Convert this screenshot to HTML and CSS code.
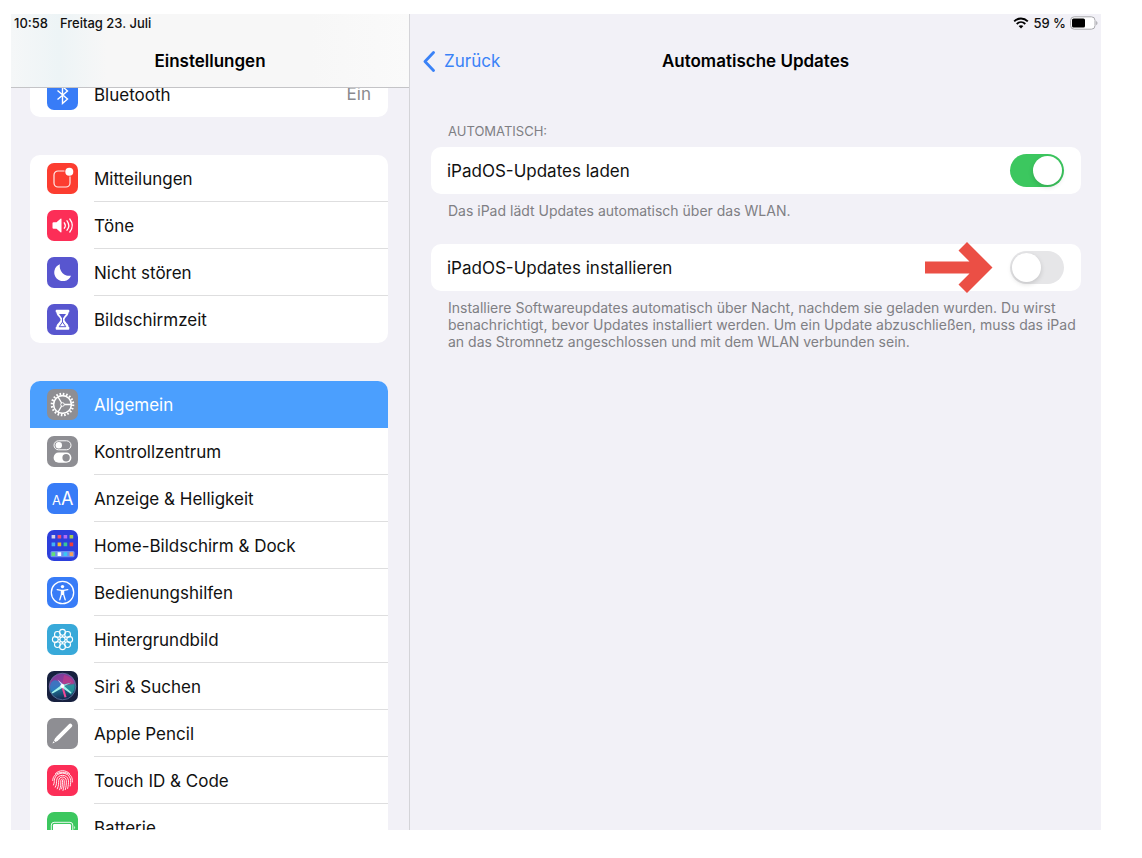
FILE: index.html
```html
<!DOCTYPE html>
<html lang="de">
<head>
    <meta charset="UTF-8">
    <meta name="viewport" content="width=device-width, initial-scale=1.0">
    <title>Einstellungen</title>
    <link rel="stylesheet" href="styles.css">
</head>
<body>
    <div class="screen">
        <aside class="sidebar">
            <header class="sidebar-header">
                <div class="status">
                    <span>10:58</span>
                    <span>Freitag 23. Juli</span>
                </div>
                <h1 class="title">Einstellungen</h1>
            </header>

            <nav class="list">
                <div class="group">
                    <a class="row" href="#">
                        <svg class="icon blue" viewBox="0 0 31 31"><path d="M10.500 11.500l10 8.500-5 4.500v-17l5 4.500-10 8.500" fill="none" stroke="#fff" stroke-width="1.400"/></svg>
                        <span class="label">Bluetooth</span>
                        <span class="value">Ein</span>
                    </a>
                </div>

                <div class="group">
                    <a class="row" href="#">
                        <svg class="icon red" viewBox="0 0 31 31">
                            <path d="M17.500 8H11a4 4 0 0 0-4 4v8a4 4 0 0 0 4 4h8a4 4 0 0 0 4-4v-6.500" fill="none" stroke="#fff" stroke-width="1.200" opacity=".9"/>
                            <circle cx="22.300" cy="8.700" r="4" fill="#fff"/>
                        </svg>
                        <span class="label">Mitteilungen</span>
                    </a>
                    <a class="row" href="#">
                        <svg class="icon pink" viewBox="0 0 31 31">
                            <path d="M5.500 13.200q0-1 1-1h3l4-3.400q1-.7 1 .5v12.400q0 1.200-1 .5l-4-3.400h-3q-1 0-1-1z" fill="#fff"/>
                            <path d="M17.300 12.800q2 2.700 0 5.400M20 10.800q3.600 4.700 0 9.400M22.800 9q5 6.500 0 13" fill="none" stroke="#fff" stroke-width="1.300" stroke-linecap="round"/>
                        </svg>
                        <span class="label">Töne</span>
                    </a>
                    <a class="row" href="#">
                        <svg class="icon indigo" viewBox="0 0 31 31"><path d="M13 7.200a9.500 9.500 0 0 0 11 11.500A8.700 8.700 0 1 1 13 7.200z" fill="#fff"/></svg>
                        <span class="label">Nicht stören</span>
                    </a>
                    <a class="row" href="#">
                        <svg class="icon indigo" viewBox="0 0 31 31">
                            <path d="M9.500 5.800h12q.8 0 .8.800v1.200q0 .8-.8.800c0 3.400-4 5-4 7.200s4 3.800 4 7q.8 0 .8.800v1.400q0 .8-.8.800h-12q-.8 0-.8-.8v-1.400q0-.8.8-.8c0-3.200 4-4.800 4-7s-4-3.800-4-7.200q-.8 0-.8-.8V6.600q0-.8.800-.8z" fill="#fff"/>
                            <path d="M12 10h7l-3 4.200h-1z" fill="#5856cf"/>
                            <path d="M15.500 13v5M15.500 18l-3.300 4.700h6.600z" fill="none" stroke="#5856cf" stroke-width="1"/>
                        </svg>
                        <span class="label">Bildschirmzeit</span>
                    </a>
                </div>

                <div class="group">
                    <a class="row selected" href="#">
                        <svg class="icon gray" viewBox="0 0 31 31">
                            <g fill="none" stroke="#fff">
                                <circle cx="15.500" cy="15.500" r="10.600" stroke-width="2.400" stroke-dasharray="1.600 1.730"/>
                                <circle cx="15.500" cy="15.500" r="8.900" stroke-width="1.600"/>
                                <circle cx="15.500" cy="15.500" r="1.800" stroke-width="1"/>
                                <path d="M17.300 15.500h7M14.600 14L11 7.800M14.600 17L11 23.200" stroke-width="1.300"/>
                            </g>
                        </svg>
                        <span class="label">Allgemein</span>
                    </a>
                    <a class="row" href="#">
                        <svg class="icon gray" viewBox="0 0 31 31">
                            <rect x="7" y="4.800" width="17" height="9" rx="4.500" fill="none" stroke="#fff" stroke-width="1"/>
                            <circle cx="11.800" cy="9.300" r="3.200" fill="#fff"/>
                            <rect x="6.600" y="16.600" width="17.800" height="10.200" rx="5.100" fill="#fff"/>
                            <circle cx="19.100" cy="21.700" r="3.700" fill="#8e8e93"/>
                        </svg>
                        <span class="label">Kontrollzentrum</span>
                    </a>
                    <a class="row" href="#">
                        <svg class="icon blue" viewBox="0 0 31 31">
                            <text class="glyph" x="5" y="22" font-size="13">A</text>
                            <text class="glyph" x="14" y="22" font-size="18">A</text>
                        </svg>
                        <span class="label">Anzeige &amp; Helligkeit</span>
                    </a>
                    <a class="row" href="#">
                        <svg class="icon home" viewBox="0 0 31 31">
                            <rect x="3.500" y="21" width="24" height="6.200" rx="1.500" fill="#6d8df0"/>
                            <g stroke-width="3.600">
                                <path d="M4.600 6.800h3.600" stroke="#d5d3e6"/><path d="M10.600 6.800h3.600" stroke="#f4506a"/><path d="M16.600 6.800h3.600" stroke="#b26cf5"/><path d="M22.600 6.800h3.600" stroke="#a5cf4c"/>
                                <path d="M4.600 14.400h3.600" stroke="#43b2f5"/><path d="M10.600 14.400h3.600" stroke="#f5b32e"/><path d="M16.600 14.400h3.600" stroke="#37c79a"/><path d="M22.600 14.400h3.600" stroke="#ee3c3c"/>
                                <path d="M4.600 24.100h3.600" stroke="#62e07a"/><path d="M10.600 24.100h3.600" stroke="#fff"/><path d="M16.600 24.100h3.600" stroke="#38c8f5"/><path d="M22.600 24.100h3.600" stroke="#f5a15a"/>
                            </g>
                        </svg>
                        <span class="label">Home-Bildschirm &amp; Dock</span>
                    </a>
                    <a class="row" href="#">
                        <svg class="icon blue" viewBox="0 0 31 31">
                            <circle cx="15.500" cy="15.500" r="11.200" fill="none" stroke="#fff" stroke-width="1.300"/>
                            <circle cx="15.500" cy="9.600" r="1.700" fill="#fff"/>
                            <path d="M10.200 12.600l4 .8h2.600l4-.8M14.400 13.500v4l-1.600 5.300M16.600 13.500v4l1.600 5.300" fill="none" stroke="#fff" stroke-width="1.300" stroke-linecap="round"/>
                            <path d="M14 13h3v5h-3z" fill="#fff"/>
                        </svg>
                        <span class="label">Bedienungshilfen</span>
                    </a>
                    <a class="row" href="#">
                        <svg class="icon cyan" viewBox="0 0 31 31">
                            <g fill="none" stroke="#fff" stroke-width="1.100">
                                <circle cx="15.500" cy="8.300" r="2.900"/><circle cx="20.600" cy="10.400" r="2.900"/><circle cx="22.700" cy="15.500" r="2.900"/><circle cx="20.600" cy="20.600" r="2.900"/>
                                <circle cx="15.500" cy="22.700" r="2.900"/><circle cx="10.400" cy="20.600" r="2.900"/><circle cx="8.300" cy="15.500" r="2.900"/><circle cx="10.400" cy="10.400" r="2.900"/>
                                <circle cx="15.500" cy="15.500" r="2.600"/>
                                <path d="M15.500 11.200v1.700M18.500 12.500l-1.200 1.200M19.800 15.500h-1.700M18.500 18.500l-1.200-1.200M15.500 19.800v-1.700M12.500 18.500l1.200-1.200M11.200 15.500h1.700M12.500 12.500l1.200 1.200"/>
                            </g>
                        </svg>
                        <span class="label">Hintergrundbild</span>
                    </a>
                    <a class="row" href="#">
                        <svg class="icon siri" viewBox="0 0 31 31">
                            <defs>
                                <linearGradient id="orb" x1=".3" y1="0" x2=".5" y2="1">
                                    <stop offset="0" stop-color="#7d3a9c"/>
                                    <stop offset=".4" stop-color="#8d3f9c"/>
                                    <stop offset=".6" stop-color="#1f6f92"/>
                                    <stop offset="1" stop-color="#152750"/>
                                </linearGradient>
                            </defs>
                            <circle cx="15.500" cy="15.500" r="13.300" fill="url(#orb)" stroke="#6d7fae" stroke-width=".7"/>
                            <path d="M15 15C11 7 4 8 3 15c0 3 1 5 2 6z" fill="#2b82c9" opacity=".8"/>
                            <path d="M15 15l2-11c5 1 9 4 10 9z" fill="#c93a85" opacity=".6"/>
                            <path d="M15 15l12-2c1 4 0 8-3 11z" fill="#28a3a0" opacity=".7"/>
                            <path d="M14.500 16l3 10.500 2-.5-3-10z" fill="#f04898"/>
                            <path d="M14.500 14L4.500 21.500l1 1L16 16.500zM16 14l8.500 7.500-1 1L14 16z" fill="#a5f3ed"/>
                            <path d="M15 14l9.500-2.500-9 4.500z" fill="#7fe3da"/>
                            <path d="M16 16L10.500 8.500l6 5z" fill="#bfd8ff"/>
                            <circle cx="15.300" cy="15" r="2" fill="#fff"/>
                        </svg>
                        <span class="label">Siri &amp; Suchen</span>
                    </a>
                    <a class="row" href="#">
                        <svg class="icon gray" viewBox="0 0 31 31">
                            <path d="M10.800 20.200L23.300 7.700" stroke="#fff" stroke-width="4" stroke-linecap="round"/>
                            <path d="M8.500 19.600l2.900 2.900-3 1.500-1.400-1.400zM6.500 23.200l1.300 1.300-2.400 1z" fill="#fff"/>
                        </svg>
                        <span class="label">Apple Pencil</span>
                    </a>
                    <a class="row" href="#">
                        <svg class="icon pink" viewBox="0 0 31 31">
                            <g fill="none" stroke="#fff" stroke-width=".9" stroke-linecap="round">
                                <path d="M8.500 8.500c4-3.800 10-3.800 14 0"/>
                                <path d="M5.700 15.500c0-11 19.600-11 19.600 0v1.500"/>
                                <path d="M6.500 20c1.300-3 .5-4 1.100-6.200 2-7.500 13.800-7.500 15.800 0 .5 2.200.3 5-.2 7.200"/>
                                <path d="M8.300 22.200c1.700-3.200 1-5 1.300-7 .8-6.500 11-6.500 11.800 0 .3 2.800-.1 5.600-.8 8.300"/>
                                <path d="M10.300 23.800c1.600-3.300 1.200-5.600 1.400-8.300.4-4.600 7.200-4.600 7.600 0 .2 3.200-.2 6.400-1 9.200"/>
                                <path d="M12.600 24.800c1.300-3 1.200-6 1.200-9.200 0-2.200 3.400-2.200 3.400 0 .2 3.600-.2 6.800-1.200 9.900"/>
                                <path d="M15.500 15.500c.1 3-.1 5.500-.9 8.300"/>
                            </g>
                        </svg>
                        <span class="label">Touch ID &amp; Code</span>
                    </a>
                    <a class="row" href="#">
                        <svg class="icon green" viewBox="0 0 31 31">
                            <rect x="4.300" y="10.300" width="21.500" height="11" rx="2.800" fill="none" stroke="#fff" stroke-width=".9"/>
                            <rect x="6" y="12" width="18" height="7.600" rx="1.300" fill="#fff"/>
                            <path d="M27.300 13.800q1.800 1.800 0 3.800z" fill="#fff"/>
                        </svg>
                        <span class="label">Batterie</span>
                    </a>
                </div>
            </nav>
        </aside>

        <main class="detail">
            <header class="detail-header">
                <div class="status status-right">
                    <svg width="16" height="12" viewBox="0 0 16 12">
                        <g fill="none" stroke="#000" stroke-width="1.900">
                            <path d="M1.200 4.400c3.900-3.900 9.700-3.900 13.600 0"/>
                            <path d="M3.700 7c2.500-2.500 6.100-2.500 8.600 0"/>
                        </g>
                        <path d="M8 11.500L5.600 9.100c1.400-1.300 3.400-1.300 4.800 0z"/>
                    </svg>
                    <span>59 %</span>
                    <svg width="28" height="14" viewBox="0 0 28 14">
                        <rect x=".6" y=".8" width="24.400" height="12.400" rx="3.600" fill="#fff" stroke="#a9a9ad" stroke-width="1"/>
                        <rect x="2" y="2.400" width="13" height="9.200" rx="1.600"/>
                        <path d="M26.200 4.700q2.600 2.300 0 4.600z" fill="#a9a9ad"/>
                    </svg>
                </div>
                <div class="navbar">
                    <a class="back" href="#">
                        <svg width="13" height="21" viewBox="0 0 13 21"><path d="M10.500 1.500L2 10.500l8.500 9" fill="none" stroke="#3a82f7" stroke-width="2.800" stroke-linecap="round" stroke-linejoin="round"/></svg>
                        Zurück
                    </a>
                    <h2 class="title">Automatische Updates</h2>
                </div>
            </header>

            <div class="content">
                <h3 class="section-title">AUTOMATISCH:</h3>
                <section class="setting">
                    <div class="card">
                        <label for="download">iPadOS-Updates laden</label>
                        <input class="switch" type="checkbox" id="download" checked>
                    </div>
                    <p class="note">Das iPad lädt Updates automatisch über das WLAN.</p>
                </section>
                <section class="setting">
                    <div class="card">
                        <label for="install">iPadOS-Updates installieren</label>
                        <svg class="arrow" width="68" height="52" viewBox="0 0 68 52"><path d="M0 19.500h44.500L33.500 8.500 42 0l25.500 25.500L42 51l-8.500-8.500 11-11H0z" fill="#eb4f45"/></svg>
                        <input class="switch" type="checkbox" id="install">
                    </div>
                    <p class="note">Installiere Softwareupdates automatisch über Nacht, nachdem sie geladen wurden. Du wirst benachrichtigt, bevor Updates installiert werden. Um ein Update abzuschließen, muss das iPad an das Stromnetz angeschlossen und mit dem WLAN verbunden sein.</p>
                </section>
            </div>
        </main>
    </div>
</body>
</html>
```
FILE: styles.css
```css
* {
    box-sizing: border-box;
}

body {
    margin: 0;
    height: 100vh;
    padding: 14px 41px 28px 11px;
    background-color: #fff;
    font-family: Inter, "Liberation Sans", sans-serif;
    font-size: 17px;
    font-optical-sizing: none;
    color: #111;
}

a {
    color: inherit;
    text-decoration: none;
}

.screen {
    display: grid;
    grid-template-columns: 399px 1fr;
    height: 100%;
    overflow: hidden;
    background-color: #f2f1f7;
}

/* Sidebar */
.sidebar {
    position: relative;
    overflow: hidden;
    border-right: 1px solid #d4d4d8;
}

/* Header stays over the scrolled list */
.sidebar-header {
    position: absolute;
    top: 0;
    left: 0;
    right: 0;
    height: 74px;
    border-bottom: 1px solid #c4c4c7;
    background: linear-gradient(to right, #f5f7f8 0, #edf4f6 48px, #f7f7f7 96px, #f7f7f7 300px, #fafafa);
}

.status {
    display: flex;
    align-items: center;
    gap: 12px;
    height: 18px;
    padding-left: 3px;
    font-size: 13px;
    font-weight: 500;
}

.title {
    margin: 0;
    font-size: 17px;
    font-weight: 600;
    line-height: 22px;
    text-align: center;
    color: #000;
}

.sidebar-header .title {
    padding-top: 18px;
}

.list {
    display: flex;
    flex-direction: column;
    gap: 38px;
    padding: 56px 21px 0 19px;
}

.group {
    overflow: hidden;
    border-radius: 10px;
    background-color: #fff;
}

.row {
    display: grid;
    grid-template-columns: 31px 1fr auto;
    align-items: center;
    column-gap: 16px;
    height: 47px;
    padding-left: 17px;
}

.icon {
    width: 31px;
    height: 31px;
    border-radius: 7px;
}

.label {
    grid-column: 2 / -1;
    grid-row: 1;
    height: 47px;
    line-height: 48px;
    border-bottom: 1px solid #dededf;
}

.row:last-child .label,
.selected .label {
    border-bottom: none;
}

.value {
    grid-column: 3;
    grid-row: 1;
    padding-right: 17px;
    line-height: 48px;
    color: #8a8a8e;
}

.selected {
    background-color: #4b9ffe;
    color: #fff;
}

.blue { background-color: #387cf7; }
.red { background-color: #fc3d30; }
.pink { background-color: #fc2e57; }
.indigo { background-color: #5856cf; }
.gray { background-color: #8e8e93; }
.cyan { background-color: #38a9d9; }
.green { background-color: #3cc75f; }
.home { background-color: #2c3fdc; }
.siri { background-color: #17203f; }

.glyph {
    fill: #fff;
}

/* Detail pane */
.detail-header {
    height: 73px;
}

.status-right {
    justify-content: flex-end;
    gap: 4px;
    padding-right: 3px;
}

.navbar {
    display: grid;
    grid-template-columns: 1fr auto 1fr;
    align-items: center;
    padding: 18px 13px 0;
}

.back {
    display: flex;
    align-items: center;
    gap: 8px;
    line-height: 22px;
    color: #3a82f7;
}

.content {
    padding: 36px 20px 0 21px;
}

.section-title {
    margin: 0 0 8px;
    padding-left: 17px;
    font-size: 13px;
    font-weight: 400;
    line-height: 16px;
    color: #7f7f84;
}

.setting {
    margin-bottom: 25px;
}

.card {
    display: flex;
    align-items: center;
    gap: 17px;
    height: 47px;
    padding: 0 17px 0 16px;
    border-radius: 10px;
    background-color: #fff;
}

.card label {
    flex: 1;
}

.note {
    margin: 0;
    padding: 8px 0 0 17px;
    font-size: 14px;
    line-height: 17px;
    color: #7f7f84;
}

.switch {
    appearance: none;
    display: flex;
    align-items: center;
    width: 54px;
    height: 33px;
    margin: 0;
    padding: 2px;
    border-radius: 17px;
    background-color: #e6e6e8;
    cursor: pointer;
}

.switch::before {
    content: "";
    width: 29px;
    height: 29px;
    border-radius: 50%;
    background-color: #fff;
    box-shadow: 0 2px 5px rgba(0, 0, 0, 0.15);
}

.switch:checked {
    justify-content: flex-end;
    background-color: #3cc75f;
}

.arrow {
    flex: none;
}
```
